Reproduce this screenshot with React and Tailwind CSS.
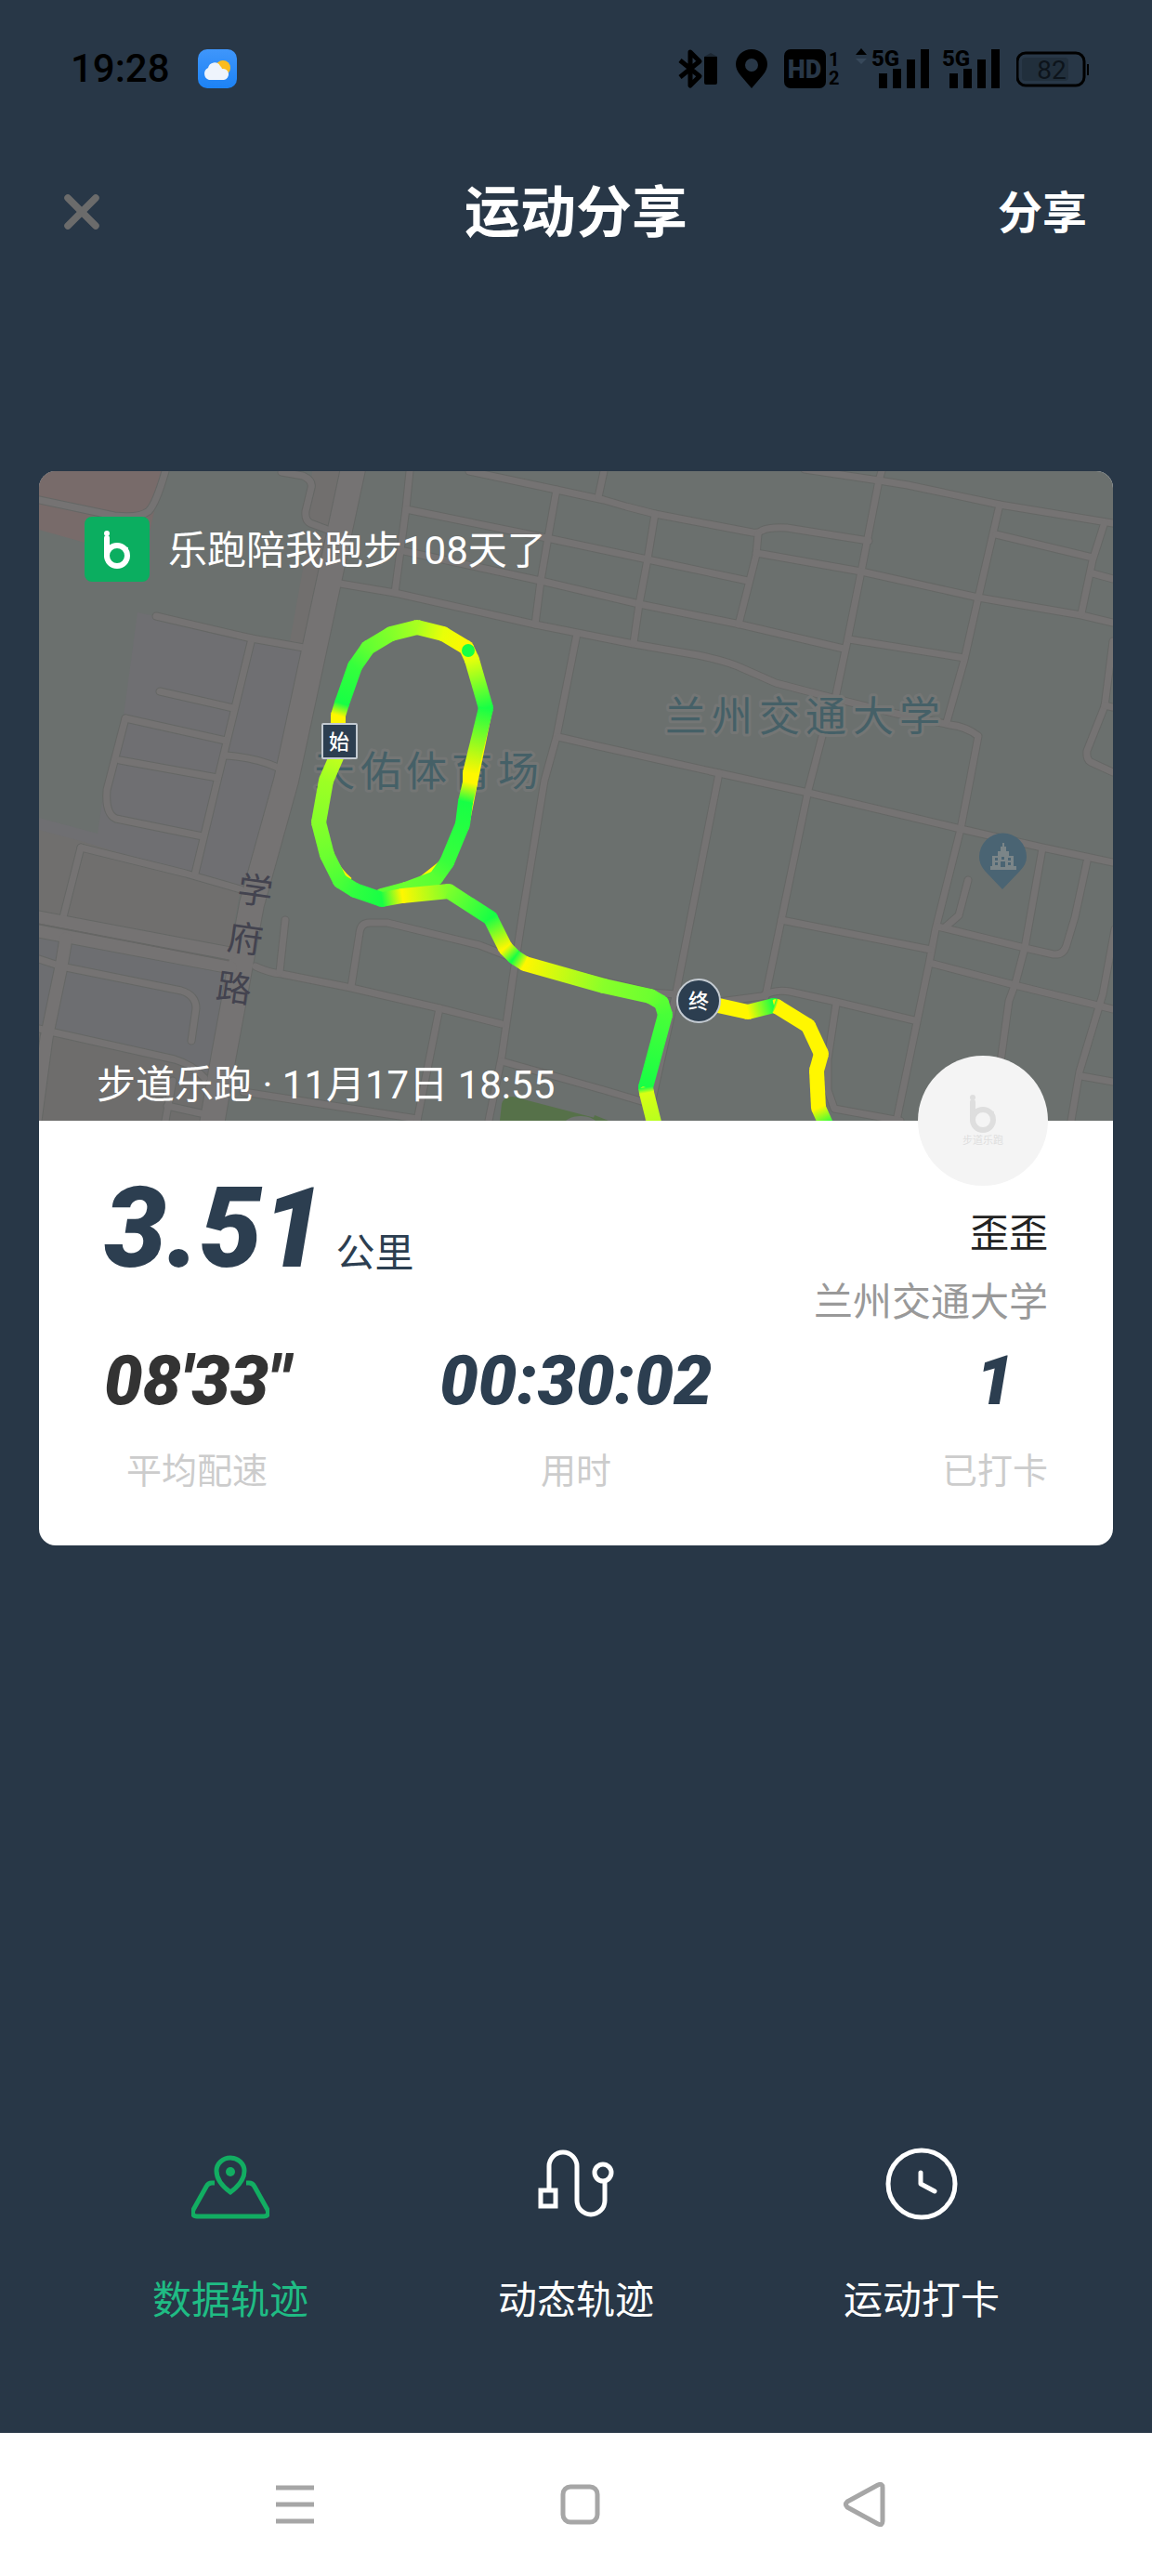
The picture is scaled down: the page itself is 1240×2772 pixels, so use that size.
import React, { useState } from 'react';
import { X } from 'lucide-react';

// Minor streets, drawn twice: a dark casing and a lighter fill
const STREETS = [
  'M42 538L123 555Q150 558 160 550Q168 542 178 507',
  'M303 508L326 512Q337 517 335 525L329 550Q328 560 334 563L358 572',
  'M441 507L437 547L425 638',
  'M437 548L584 578L697 602L805 625',
  'M505 507L599 527L650 538L674 545L705 553L810 573Q816 574 820 571Q828 567 847 568L935 582',
  'M650 507L644 535',
  'M599 527L590 578L582 625L576 672',
  'M435 593L582 625L688 650L797 672L908 698',
  'M366 628L425 638L576 672L682 693L751 705Q785 712 801 720L835 735L900 752L965 768L1023 780Q1040 782 1053 792L1044 840L1034 892L1007 1000L1000 1037L965 1206',
  'M621 682L599 793L586 840L562 987L552 1053L540 1137L526 1206',
  'M601 793L640 802L774 832L870 853L1034 892L1122 912L1198 928',
  'M949 507L946 517L927 615L912 690L900 747L885 792L870 850L841 990L824 1072',
  'M866 505L946 517L977 522L1076 543L1198 563',
  'M1076 543L1053 643L1038 710L1019 777',
  'M816 575L814 597L795 672',
  'M814 595L927 615L1053 643L1164 662L1198 670',
  'M914 688L1038 708',
  'M1072 575L1176 600',
  'M1189 562L1176 603L1164 660',
  'M1176 617L1198 623',
  'M705 553L697 602L688 650L682 692',
  'M1198 690L1189 760L1170 808Q1169 817 1174 820L1198 831',
  'M1189 759L1198 761',
  'M774 832L728 1067L697 1206',
  'M841 990L1002 1022',
  'M1004 1037L1092 1060L1182 1082L1198 1086',
  'M1009 997L1103 1020L1134 1027Q1145 1028 1148 1017L1157 987L1170 927',
  'M1122 913L1103 1020L1093 1058L1086 1077L1076 1150',
  'M1042 947L1032 985L1017 998',
  'M1200 1000L1187 1070L1162 1153L1153 1206',
  'M1164 1158L1198 1164',
  'M774 1078L820 1072Q835 1064 850 1067L900 1078L984 1098',
  'M900 1080L891 1140L891 1173L898 1193L969 1206',
  'M540 1142L650 1173L697 1187',
  'M262 1175L449 1204',
  'M275 1040Q290 1047 303 1048L378 1063L473 1085L540 1102',
  'M473 1085L449 1206',
  'M307 990L301 1046',
  'M378 1062L387 1004Q388 993 398 993L417 993L516 1017L560 1034L700 1068L728 1070',
  'M87 912L200 940L259 957',
  'M87 912L68 987',
  'M42 1032L66 1040L195 1066Q211 1071 211 1085L206 1120',
  'M42 1107L54 1110L188 1140Q208 1146 220 1160',
  'M178 1206L186 1163M180 1190L216 1198',
  'M135 773L115 850Q113 876 125 881L218 900',
  'M271 687L234 840L210 940',
  'M168 663L271 687L327 697',
  'M172 744L251 762',
  'M135 773L243 797',
  'M129 818L234 837',
  'M243 813Q275 815 299 826',
];

const ROADS = [
  { d: 'M381 500L308 840L271 973L241 1135L228 1210', width: 26 },
  { d: 'M36 986L248 1026', width: 13 },
  { d: 'M36 1001L248 1041', width: 13 },
  { d: 'M71 1010L66 1040L50 1117L38 1206', width: 13 },
];

const Y = '#fff700';
const G = '#17ff45';
const L = '#9dff24';

// [x, y, pace colour]
const LAP = [
  [364, 810, '#c8ff1c'], [351, 840, L], [343, 885, '#86ff2a'], [352, 920, '#6cff30'],
  [366, 948, '#4bff38'], [382, 958, '#30ff40'], [411, 968, G], [433, 964, Y],
  [483, 959, '#7cff2c'], [528, 988, G], [544, 1020, Y], [554, 1030, G], [565, 1037, Y],
  [650, 1061, '#88ff2a'], [700, 1072, '#6cff30'], [712, 1079, '#58ff34'], [716, 1092, '#48ff38'],
  [695, 1170, G], [696, 1176, '#d8ff14'], [705, 1212, '#b4ff20'],
];
const LOOP = [
  [364, 790, Y], [364, 770, Y], [368, 757, G], [382, 717, '#35ff3c'], [396, 697, '#62ff32'],
  [421, 682, '#82ff2a'], [449, 675, '#a8ff20'], [477, 682, '#e8ff08'], [502, 697, Y],
  [508, 710, '#e4ff0c'], [523, 762, G], [506, 832, Y], [506, 842, Y], [501, 863, G],
  [498, 887, '#22ff42'], [481, 928, '#38ff3c'], [469, 945, '#58ff34'], [437, 957, '#6cff30'],
  [411, 964, '#58ff34'],
];
const FINISH = [
  [760, 1079, Y], [805, 1089, Y], [833, 1082, G], [836, 1083, Y], [870, 1104, Y],
  [884, 1134, Y], [879, 1152, Y], [881, 1192, Y], [890, 1212, G],
];

// Dots fill the corners, gradient segments run over them
const PaceLine = ({ id, points }) => (
  <g strokeWidth="16">
    {points.map(([x, y, color], i) => (
      <circle key={i} cx={x} cy={y} r="8" fill={color} stroke="none" />
    ))}
    {points.slice(1).map(([x2, y2, to], i) => {
      const [x1, y1, from] = points[i];
      const key = `${id}-${i}`;
      return (
        <g key={key}>
          <linearGradient id={key} gradientUnits="userSpaceOnUse" x1={x1} y1={y1} x2={x2} y2={y2}>
            <stop offset="0" stopColor={from} />
            <stop offset="1" stopColor={to} />
          </linearGradient>
          <line x1={x1} y1={y1} x2={x2} y2={y2} stroke={`url(#${key})`} />
        </g>
      );
    })}
  </g>
);

const RouteMap = () => (
  <svg
    viewBox="42 507 1156 699"
    preserveAspectRatio="xMidYMid slice"
    className="block h-full w-full [grid-area:1/1]"
    role="img"
    aria-label="运动轨迹"
  >
    <rect x="42" y="507" width="1156" height="699" fill="#6b706e" />
    <path d="M42 507H178L168 542L160 575L150 600L88 583L42 570Z" fill="#786b6a" />
    <path d="M336 507H372L350 600L325 695L312 690L330 590L352 572L329 558Z" fill="#716f6e" />
    <path d="M148 659L327 697L300 840L259 960L87 912L42 1000V880L105 897L112 850L133 770Z" fill="#6f6f72" />
    <path d="M42 893L87 905L259 957L245 1030L42 988Z" fill="#706f6e" />
    <path d="M42 1000L248 1040L228 1160L42 1108Z" fill="#6d6e71" />
    <path d="M42 1108L228 1155L222 1206H42Z" fill="#6e6d6c" />
    <path d="M538 1206L540 1188Q542 1180 552 1180L652 1206Z" fill="#567149" />
    <path d="M640 1200L655 1206H638Z" fill="#567149" />
    <ellipse cx="625" cy="1212" rx="19" ry="11" fill="#6f7370" />

    <g fill="none" strokeLinejoin="round" strokeLinecap="round">
      <g stroke="#656765">
        {STREETS.map((d) => <path key={d} d={d} strokeWidth="9" />)}
        {ROADS.map((r) => <path key={r.d} d={r.d} strokeWidth={r.width + 2} />)}
      </g>
      <g stroke="#757373">
        {STREETS.map((d) => <path key={d} d={d} strokeWidth="7" />)}
        {ROADS.map((r) => <path key={r.d} d={r.d} strokeWidth={r.width} />)}
      </g>
      <path d="M42 994L246 1034" stroke="#676665" strokeWidth="1" />
    </g>

    <g fontSize="44" fill="#456067" stroke="#747675" strokeWidth="6" strokeLinejoin="round" paintOrder="stroke">
      <text x="716 766 817 867 918 968" y="787">兰州交通大学</text>
      <text x="338 388 437 486 536" y="846">天佑体育场</text>
    </g>
    <g fontSize="38" fill="#43434f" textAnchor="middle">
      <text x="275" y="972" transform="rotate(8 275 957)">学</text>
      <text x="264" y="1024" transform="rotate(8 264 1010)">府</text>
      <text x="252" y="1077" transform="rotate(8 252 1063)">路</text>
    </g>

    {/* campus pin */}
    <path d="M1079 957L1060 937Q1054 930 1054 922A25 25 0 0 1 1105 922Q1105 930 1098 937Z" fill="#4a6473" />
    <path d="M1066 934V932H1068V921H1074V916H1077V911H1079V907H1081V911H1083V916H1086V921H1091V932H1094V936H1066Z" fill="#7b8588" />
    <path d="M1071 923h3v3h-3zM1078 922h3v3h-3zM1085 923h3v3h-3zM1071 928h3v3h-3zM1077 927h5v6h-5zM1085 928h3v3h-3z" fill="#4a6473" />

    <path d="M346 888Q352 928 376 948M440 958L478 928M526 764L500 893" stroke={Y} strokeWidth="8" fill="none" />
    <PaceLine id="loop" points={LOOP} />
    <PaceLine id="lap" points={LAP} />
    <PaceLine id="finish" points={FINISH} />
    <circle cx="504" cy="700" r="7" fill={G} />

    <g fill="#2c3e50" stroke="#c3cad1" strokeWidth="2">
      <rect x="347" y="779" width="37" height="37" rx="1" />
      <circle cx="752" cy="1077" r="23" />
    </g>
    <g fontSize="22" fontWeight="500" fill="#fff" textAnchor="middle">
      <text x="365" y="806">始</text>
      <text x="752" y="1085">终</text>
    </g>
  </svg>
);

const BrandMark = ({ className }) => (
  <svg viewBox="0 0 32 44" className={className} fill="none" stroke="currentColor" aria-hidden="true">
    <circle cx="5" cy="5" r="3" fill="currentColor" stroke="none" />
    <path d="M5 10V29" strokeWidth="6" strokeLinecap="round" />
    <circle cx="16" cy="29" r="11" strokeWidth="6" />
    <path d="M21 19L28 20L26 28Z" fill="currentColor" stroke="none" />
  </svg>
);

const SignalBars = () => (
  <svg viewBox="0 -6 64 56" className="h-14 w-16" aria-hidden="true">
    <text x="0" y="19" fontSize="24" fontWeight="800">5G</text>
    <path d="M8 27h9v16h-9zM23 22h9v21h-9zM38 12h9v31h-9zM53 1h9v42h-9z" />
  </svg>
);

const StatusBar = () => (
  <div className="flex h-[148px] items-center justify-between pl-[76px] pr-[66px] text-black">
    <div className="flex items-center gap-[30px]">
      <span className="text-[42px] font-medium leading-none">19:28</span>
      <svg viewBox="0 0 42 42" className="size-[42px]" aria-hidden="true">
        <linearGradient id="sky" x1="0" y1="0" x2="0" y2="1">
          <stop offset="0" stopColor="#3f96fb" />
          <stop offset="1" stopColor="#1c82f5" />
        </linearGradient>
        <rect width="42" height="42" rx="10" fill="url(#sky)" />
        <circle cx="27" cy="20" r="8" fill="#fbbc1f" />
        <path d="M12 33A7 7 0 0 1 11 20A7 7 0 0 1 24 18A6 6 0 0 1 26 21A6 6 0 0 1 28 33Z" fill="#eef4fc" />
      </svg>
    </div>
    <div className="flex items-center">
      <svg viewBox="0 0 44 44" className="mr-[18px] size-11" aria-hidden="true">
        <path d="M2 13L23 30L13 40V4L23 14L2 31" fill="none" stroke="black" strokeWidth="5" strokeLinejoin="round" />
        <path d="M28 9h14v28q0 2-2 2H30q-2 0-2-2z" />
        <path d="M28 9L35 5L42 9Z" fill="#1d2833" />
      </svg>
      <svg viewBox="0 0 34 44" className="mr-[18px] h-11 w-[34px]" aria-hidden="true">
        <path fillRule="evenodd" d="M17 43L5 29Q0 23 0 17A17 16 0 0 1 34 17Q34 23 29 29ZM17 11A7 7 0 1 0 17 25A7 7 0 1 0 17 11Z" />
      </svg>
      <svg viewBox="0 0 60 44" className="mr-4 h-11 w-[60px]" aria-hidden="true">
        <rect y="1" width="45" height="42" rx="7" />
        <text x="22" y="32" fontSize="27" fontWeight="900" fill="#283747" textAnchor="middle">HD</text>
        <text x="48" y="19" fontSize="20" fontWeight="700">1</text>
        <text x="48" y="39" fontSize="20" fontWeight="700">2</text>
      </svg>
      <svg viewBox="0 0 14 44" className="mr-1 h-11 w-[14px]" aria-hidden="true">
        <path d="M1 7L7 0L13 7Z" />
        <path d="M1 11L7 17L13 11Z" fill="#37485a" />
      </svg>
      <SignalBars />
      <span className="w-3" />
      <SignalBars />
      <svg viewBox="0 0 80 44" className="ml-4 h-11 w-20" aria-hidden="true">
        <rect x="1" y="5" width="72" height="35" rx="9" fill="none" stroke="black" strokeWidth="3" />
        <rect x="6" y="10" width="50" height="25" rx="4" fill="#212f3c" />
        <path d="M76 17h2v12h-2z" />
        <text x="38" y="33" fontSize="28" fill="#0d141b" textAnchor="middle">82</text>
      </svg>
    </div>
  </div>
);

const TrackIcon = () => (
  <svg viewBox="0 0 84 84" className="size-[84px]" fill="none" stroke="#12ad62" strokeWidth="5" aria-hidden="true">
    <path d="M25 41H22Q18 41 16 45L2 70Q0 77 6 77H78Q84 77 82 70L68 45Q66 41 62 41H59" />
    <path d="M42 51Q27 40 27 28A15 14 0 0 1 57 28Q57 40 42 51Z" />
    <circle cx="42" cy="29" r="5" fill="#12ad62" stroke="none" />
  </svg>
);

const RouteIcon = () => (
  <svg viewBox="0 0 84 84" className="size-[84px]" fill="none" stroke="white" strokeWidth="5" aria-hidden="true">
    <path d="M13 48V23A15 15 0 0 1 43 23V60A15 15 0 0 0 73 60V40" />
    <rect x="4" y="49" width="16" height="17" />
    <circle cx="71" cy="30" r="9" />
  </svg>
);

const ClockIcon = () => (
  <svg viewBox="0 0 84 84" className="size-[84px]" fill="none" stroke="white" strokeWidth="5" strokeLinecap="round" strokeLinejoin="round" aria-hidden="true">
    <circle cx="42" cy="42" r="36" />
    <path d="M41 30V42L56 50" />
  </svg>
);

const TABS = [
  { id: 'data', label: '数据轨迹', Icon: TrackIcon },
  { id: 'dynamic', label: '动态轨迹', Icon: RouteIcon },
  { id: 'checkin', label: '运动打卡', Icon: ClockIcon },
];

const STATS = [
  { label: '平均配速', value: '08\'33"', align: 'justify-self-start', color: 'text-[#333333]' },
  { label: '用时', value: '00:30:02', align: 'justify-self-center', color: 'text-[#2c3e50]' },
  { label: '已打卡', value: '1', align: 'justify-self-end', color: 'text-[#2c3e50]' },
];

const ShareCard = () => (
  <article className="overflow-hidden rounded-[18px] bg-white">
    <div className="grid aspect-[1156/699]">
      <RouteMap />
      <div className="z-10 flex flex-col justify-between pb-2 pt-[49px] text-[42px] leading-[60px] text-white [grid-area:1/1]">
        <div className="flex items-center gap-5 pl-[49px]">
          <div className="flex size-[70px] items-center justify-center rounded-lg bg-[#0bae60]">
            <BrandMark className="h-11 w-8" />
          </div>
          <h2 className="pt-1">乐跑陪我跑步108天了</h2>
        </div>
        <p className="pl-[62px]">步道乐跑 · 11月17日 18:55</p>
      </div>
    </div>

    <div className="relative px-[70px] pb-[51px] pt-[52px]">
      <div className="absolute -top-[70px] right-[70px] z-20 flex size-[140px] flex-col items-center justify-center rounded-full bg-[#f4f4f4] text-[#dedede]">
        <BrandMark className="h-11 w-8" />
        <span className="text-[11px] leading-4">步道乐跑</span>
      </div>
      <div className="flex items-start justify-between">
        <p className="flex items-baseline gap-3 text-[#2c3e50]">
          <span className="text-[120px] font-black italic leading-[128px]">3.51</span>
          <span className="text-[42px] leading-[60px]">公里</span>
        </p>
        <div className="pt-[33px] text-right text-[42px] leading-[74px]">
          <p className="text-[#222222]">歪歪</p>
          <p className="text-[#999999]">兰州交通大学</p>
        </div>
      </div>
      <dl className="mt-[7px] grid grid-cols-3">
        {STATS.map((stat) => (
          <div key={stat.label} className={`flex flex-col-reverse items-center gap-7 ${stat.align}`}>
            <dt className="text-[38px] leading-[58px] text-[#cccccc]">{stat.label}</dt>
            <dd className={`text-[74px] font-black italic leading-[80px] ${stat.color}`}>{stat.value}</dd>
          </div>
        ))}
      </dl>
    </div>
  </article>
);

const App = () => {
  const [activeTab, setActiveTab] = useState('data');

  return (
    <div className="flex min-h-screen flex-col bg-[#283747] font-['Roboto','Noto_Sans_CJK_SC',sans-serif]">
      <StatusBar />

      <header className="grid h-[160px] grid-cols-3 items-center px-[70px] font-bold text-white">
        <button type="button" aria-label="关闭" className="justify-self-start text-[#6b6b6b]">
          <X className="-ml-3 size-[60px]" strokeWidth={3} />
        </button>
        <h1 className="pt-1 text-center text-[60px] leading-[80px]">运动分享</h1>
        <button type="button" className="justify-self-end pt-1 text-[48px] leading-[80px]">分享</button>
      </header>

      <main className="px-[42px] pt-[199px]">
        <ShareCard />
      </main>

      <div className="mt-auto grid grid-cols-3 px-[62px] pb-[112px]">
        {TABS.map(({ id, label, Icon }) => (
          <button
            key={id}
            type="button"
            onClick={() => setActiveTab(id)}
            className={`flex flex-col items-center gap-[54px] text-[42px] leading-[60px] ${
              activeTab === id ? 'text-[#1fbc84]' : 'text-white'
            }`}
          >
            <Icon />
            <span>{label}</span>
          </button>
        ))}
      </div>

      <nav className="grid h-[154px] grid-cols-3 items-center justify-items-center bg-white pl-[164px] pr-[156px]">
        <button type="button" aria-label="菜单">
          <svg viewBox="0 0 48 48" className="size-12" stroke="#a6a6a6" strokeWidth="5">
            <path d="M4 6H45M4 24H45M4 42H45" />
          </svg>
        </button>
        <button type="button" aria-label="主页">
          <svg viewBox="0 0 48 48" className="size-12" fill="none" stroke="#a6a6a6" strokeWidth="5">
            <rect x="6" y="5" width="37" height="38" rx="8" />
          </svg>
        </button>
        <button type="button" aria-label="返回">
          <svg viewBox="0 0 48 48" className="size-12" fill="none" stroke="#a6a6a6" strokeWidth="5" strokeLinejoin="round">
            <path d="M5 21Q2 24 5 27L38 45Q43 47 43 42V6Q43 1 38 3Z" />
          </svg>
        </button>
      </nav>
    </div>
  );
};

export default App;
